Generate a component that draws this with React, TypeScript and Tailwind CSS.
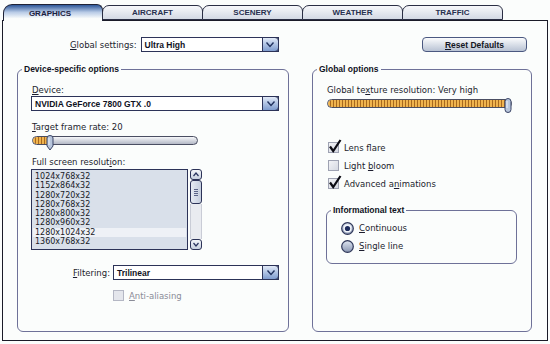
import React from "react";

const txt = "font-['DejaVu_Sans',Verdana,sans-serif] text-[8.5px] leading-[10px] text-[#1c1d2e]";
const bold = "font-['Liberation_Sans',Arial,sans-serif] font-bold";
const stripes =
  "bg-[image:repeating-linear-gradient(90deg,#f0b44e_0px,#f0b44e_2px,#a8691f_2px,#a8691f_3px)]";

const tabs = ["GRAPHICS", "AIRCRAFT", "SCENERY", "WEATHER", "TRAFFIC"];
const resolutions = [
  "1024x768x32",
  "1152x864x32",
  "1280x720x32",
  "1280x768x32",
  "1280x800x32",
  "1280x960x32",
  "1280x1024x32",
  "1360x768x32",
];

const Chevron = () => (
  <svg width="14" height="11" viewBox="0 0 14 11">
    <path d="M3.5 3.5 L7 7.5 L10.5 3.5" fill="none" stroke="#22325e" strokeWidth="1.4" />
  </svg>
);

const Dropdown = ({ value, className }: { value: string; className: string }) => (
  <div className={`flex h-[15px] border border-[#2c3358] bg-white ${className}`}>
    <div className={`flex flex-1 items-center pl-[3px] text-[8.5px] text-[#10121e] ${bold}`}>{value}</div>
    <div className="-my-px -mr-px flex w-[17px] items-center justify-center rounded-r-[4px] border border-[#2c3358] bg-linear-to-b from-[#e2eaf7] to-[#7f9cce]">
      <Chevron />
    </div>
  </div>
);

const Slider = ({
  width,
  fill,
  thumb,
  pointer,
}: {
  width: string;
  fill: string;
  thumb: string;
  pointer?: boolean;
}) => (
  <div className={`relative h-[13px] ${width}`}>
    <div className="mt-[2px] h-[9px] overflow-hidden rounded-full border border-[#4a4e62] bg-linear-to-b from-[#f6f7fa] to-[#b4b9c6]">
      <div className={`h-full rounded-l-full ${fill} ${stripes}`} />
    </div>
    <svg className={`absolute top-[-1px] ${thumb}`} width="8" height="16" viewBox="0 0 8 16">
      {pointer ? (
        <path d="M1 3 Q1 0.5 4 0.5 Q7 0.5 7 3 L7 11 L4 15 L1 11 Z" fill="#b8c6dc" stroke="#3a4466" strokeWidth="1" />
      ) : (
        <rect x="1" y="0.5" width="6" height="14" rx="3" fill="#b8c6dc" stroke="#3a4466" strokeWidth="1" />
      )}
      <line x1="3" y1="3" x2="3" y2="10" stroke="#eef3fa" strokeWidth="1" />
    </svg>
  </div>
);

const Check = ({ checked, label }: { checked: boolean; label: React.ReactNode }) => (
  <div className="flex h-[11px] items-center gap-[5px]">
    <div className="relative h-[11px] w-[11px] border border-[#9ea2b2] bg-linear-to-br from-[#f2f3f6] to-[#d6d9e2]">
      {checked && (
        <svg className="absolute left-[-1px] top-[-4px]" width="14" height="14" viewBox="0 0 14 14">
          <path d="M2 7.5 L5.2 12 L12.5 1" fill="none" stroke="#0c0c14" strokeWidth="2.2" />
        </svg>
      )}
    </div>
    <span className={txt}>{label}</span>
  </div>
);

const Radio = ({ checked, label }: { checked: boolean; label: React.ReactNode }) => (
  <div className="flex h-[12px] items-center gap-[5px]">
    <svg width="13" height="13" viewBox="0 0 13 13">
      <defs>
        <linearGradient id={checked ? "rg1" : "rg2"} x1="0" y1="0" x2="0" y2="1">
          <stop offset="0" stopColor="#dfe6f1" />
          <stop offset="1" stopColor="#8996b2" />
        </linearGradient>
      </defs>
      <circle cx="6.5" cy="6.5" r="5.8" fill={`url(#${checked ? "rg1" : "rg2"})`} stroke="#2e3658" strokeWidth="1.2" />
      {checked && (
        <>
          <circle cx="6.5" cy="6.5" r="4" fill="#f3f6fb" />
          <circle cx="6.5" cy="6.5" r="2.6" fill="#1d2c5c" />
        </>
      )}
    </svg>
    <span className={txt}>{label}</span>
  </div>
);

const Legend = ({ children }: { children: React.ReactNode }) => (
  <legend className={`ml-[4px] px-[2px] text-[8.5px] leading-[10px] text-[#10121e] ${bold}`}>{children}</legend>
);

const ScrollArrow = ({ up }: { up?: boolean }) => (
  <div className="flex h-[11px] items-center justify-center rounded-[3px] border border-[#2c3358] bg-linear-to-b from-[#f4f6fa] to-[#c7d0df]">
    <svg width="8" height="7" viewBox="0 0 8 7">
      <path d={up ? "M1.5 5 L4 2 L6.5 5" : "M1.5 2 L4 5 L6.5 2"} fill="none" stroke="#2a3560" strokeWidth="1.2" />
    </svg>
  </div>
);

export default function App() {
  return (
    <div className={`flex h-[344px] w-[550px] flex-col bg-[#fbfdfc] px-[2px] pb-[3px] pt-[4px] ${txt}`}>
      {/* tabs */}
      <div className="relative z-10 -mb-px flex h-[17px] pl-[1px]">
        {tabs.map((t, i) =>
          i === 0 ? (
            <div
              key={t}
              className={`flex w-[100px] items-center justify-center rounded-tl-[9px] rounded-tr-[6px] border border-b-0 border-[#1e2236] bg-linear-to-b from-[#2e5798] via-[#b8cbe6] via-45% to-[#fbfdfc] to-85% pt-[1px] pr-[6px] text-[8px] text-[#1a2140] ${bold}`}
            >
              {t}
            </div>
          ) : (
            <div
              key={t}
              className={`-ml-px mt-[1px] flex h-[15px] w-[101px] items-center justify-center rounded-tl-[7px] rounded-tr-[6px] border border-[#2a2e44] bg-linear-to-b from-[#f7f8fb] to-[#d3d9e4] text-[8px] text-[#27304f] ${bold}`}
            >
              {t}
            </div>
          )
        )}
      </div>

      {/* panel */}
      <div className="flex flex-1 flex-col border border-[#1a1b28] pb-[8px] pt-[16px]">
        <div className="flex h-[15px] items-center pl-[67px] pr-[20px]">
          <span className="mr-[4px]">
            <u>G</u>lobal settings:
          </span>
          <Dropdown value="Ultra High" className="w-[138px]" />
          <div
            className={`ml-auto flex h-[15px] w-[105px] items-center justify-center rounded-[4px] border border-[#4a5880] bg-linear-to-b from-[#fbfcfd] to-[#b9c3d4] text-[8.5px] text-[#141624] ${bold}`}
          >
            <span>
              <u>R</u>eset Defaults
            </span>
          </div>
        </div>

        <div className="mt-[12px] flex flex-1 gap-[23px] pl-[14px]">
          {/* left group */}
          <fieldset className="w-[272px] rounded-[6px] border border-[#6e7198]">
            <Legend>Device-specific options</Legend>
            <div className="flex flex-col pl-[13px] pr-[9px]">
              <div className="mt-[11px] pl-[1px]">
                <u>D</u>evice:
              </div>
              <Dropdown value="NVIDIA GeForce 7800 GTX .0" className="mt-[1px] w-[248px]" />
              <div className="mt-[11px] pl-[1px]">
                <u>T</u>arget frame rate: 20
              </div>
              <div className="mt-[2px] pl-[1px]">
                <Slider width="w-[166px]" fill="w-[16px]" thumb="left-[14px]" pointer />
              </div>
              <div className="mt-[8px] pl-[1px]">
                Full screen resolut<u>i</u>on:
              </div>
              <div className="mt-[2px] flex h-[81px] gap-[2px]">
                <div className="w-[157px] border border-[#2c3358] bg-[#d9e0ea] px-[1px] pt-[2px] font-['DejaVu_Sans',sans-serif] text-[8px] leading-[9.3px] text-[#181a26]">
                  {resolutions.map((r) => (
                    <div key={r} className={`pl-[2px] ${r === "1280x1024x32" ? "bg-[#eef1f6]" : ""}`}>
                      {r}
                    </div>
                  ))}
                </div>
                <div className="flex w-[12px] flex-col">
                  <ScrollArrow up />
                  <div className="flex h-[24px] flex-col items-center justify-center gap-[1px] rounded-[3px] border border-[#2c3358] bg-linear-to-r from-[#e6ebf3] to-[#c4cddd]">
                    <div className="h-px w-[4px] bg-[#5a6488]" />
                    <div className="h-px w-[4px] bg-[#5a6488]" />
                    <div className="h-px w-[4px] bg-[#5a6488]" />
                    <div className="h-px w-[4px] bg-[#5a6488]" />
                  </div>
                  <div className="flex-1 border-x border-[#c9ccd6] bg-[#e9ebf0]" />
                  <ScrollArrow />
                </div>
              </div>
              <div className="mt-[15px] flex items-center justify-end gap-[3px]">
                <span>
                  <u>F</u>iltering:
                </span>
                <Dropdown value="Trilinear" className="w-[166px]" />
              </div>
              <div className="mt-[10px] pl-[82px]">
                <div className="flex h-[11px] items-center gap-[5px] text-[#8a8c98]">
                  <div className="h-[11px] w-[11px] border border-[#b4b7c4] bg-[#e4e6ec]" />
                  <span>
                    <u>A</u>nti-aliasing
                  </span>
                </div>
              </div>
            </div>
          </fieldset>

          {/* right group */}
          <fieldset className="w-[220px] rounded-[6px] border border-[#6e7198]">
            <Legend>Global options</Legend>
            <div className="flex flex-col pl-[14px]">
              <div className="mt-[11px]">
                Global te<u>x</u>ture resolution: Very high
              </div>
              <div className="mt-[2px]">
                <Slider width="w-[185px]" fill="w-full" thumb="left-[177px]" />
              </div>
              <div className="mt-[30px] flex flex-col gap-[7px] pl-[1px]">
                <Check checked label={<>Lens f<u>l</u>are</>} />
                <Check checked={false} label={<>Light <u>b</u>loom</>} />
                <Check checked label={<>Advanced a<u>n</u>imations</>} />
              </div>
              <fieldset className="-ml-px mt-[16px] w-[191px] rounded-[6px] border border-[#6e7198]">
                <Legend>Informational text</Legend>
                <div className="flex flex-col gap-[6px] pb-[11px] pl-[14px] pt-[7px]">
                  <Radio checked label={<><u>C</u>ontinuous</>} />
                  <Radio checked={false} label={<><u>S</u>ingle line</>} />
                </div>
              </fieldset>
            </div>
          </fieldset>
        </div>
      </div>
    </div>
  );
}
